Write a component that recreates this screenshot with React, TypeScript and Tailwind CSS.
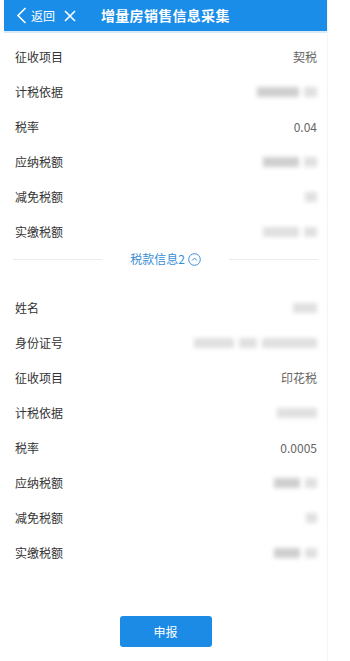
import React from "react";

type Seg = { w: number; shade: string };

function Blur({ segs }: { segs: Seg[] }) {
  return (
    <div className="flex items-center gap-[5px] blur-[2px]">
      {segs.map((s, i) => (
        <div key={i} className={`h-[10px] ${s.shade}`} style={{ width: s.w }} />
      ))}
    </div>
  );
}

type Row = { label: string; value?: string; blur?: Seg[] };

const L = "bg-[#e0e0e0]";
const M = "bg-[#cfcfcf]";

const sec1: Row[] = [
  { label: "征收项目", value: "契税" },
  { label: "计税依据", blur: [{ w: 42, shade: M }, { w: 13, shade: L }] },
  { label: "税率", value: "0.04" },
  { label: "应纳税额", blur: [{ w: 36, shade: M }, { w: 13, shade: L }] },
  { label: "减免税额", blur: [{ w: 12, shade: L }] },
  { label: "实缴税额", blur: [{ w: 36, shade: L }, { w: 13, shade: L }] },
];

const sec2: Row[] = [
  { label: "姓名", blur: [{ w: 24, shade: L }] },
  { label: "身份证号", blur: [{ w: 40, shade: L }, { w: 18, shade: L }, { w: 55, shade: L }] },
  { label: "征收项目", value: "印花税" },
  { label: "计税依据", blur: [{ w: 40, shade: L }] },
  { label: "税率", value: "0.0005" },
  { label: "应纳税额", blur: [{ w: 26, shade: M }, { w: 12, shade: L }] },
  { label: "减免税额", blur: [{ w: 11, shade: L }] },
  { label: "实缴税额", blur: [{ w: 26, shade: M }, { w: 12, shade: L }] },
];

function Rows({ rows }: { rows: Row[] }) {
  return (
    <div className="flex flex-col">
      {rows.map((r, i) => (
        <div key={i} className="h-[35px] flex items-center justify-between pl-[11px] pr-[10px]">
          <span className="text-[12px] text-[#333]">{r.label}</span>
          {r.value ? (
            <span className="text-[12px] text-[#666]">{r.value}</span>
          ) : (
            <Blur segs={r.blur || []} />
          )}
        </div>
      ))}
    </div>
  );
}

export default function App() {
  return (
    <div
      className="w-[350px] h-[661px] bg-white flex overflow-hidden"
      style={{ fontFamily: '"Noto Sans CJK SC", "Noto Sans", sans-serif' }}
    >
      <div className="ml-[4px] w-[324px] flex flex-col border-r border-[#f4f4f4]">
        <div className="h-[33px] bg-[#1a8de8] border-b-2 border-[#d9eaf8] flex items-center text-white shrink-0">
          <svg width="11" height="17" viewBox="0 0 11 17" className="ml-[12px]">
            <path d="M9.5 1 L2 8.5 L9.5 16" fill="none" stroke="white" strokeWidth="1.6" />
          </svg>
          <span className="ml-[4px] text-[12px]">返回</span>
          <svg width="12" height="12" viewBox="0 0 12 12" className="ml-[9px]">
            <path d="M1 1 L11 11 M11 1 L1 11" fill="none" stroke="white" strokeWidth="1.6" />
          </svg>
          <span className="ml-[25px] text-[14px] font-bold tracking-[0.3px]">增量房销售信息采集</span>
        </div>
        <div className="pt-[6px]">
          <Rows rows={sec1} />
        </div>
        <div className="h-[20px] flex items-center px-[9px]">
          <div className="flex-1 h-px bg-[#ececec]" />
          <div className="flex items-center px-[28px] text-[12px] text-[#3a8ed6]">
            <span>税款信息2</span>
            <svg width="13" height="13" viewBox="0 0 13 13" className="ml-[3px]">
              <circle cx="6.5" cy="6.5" r="5.8" fill="none" stroke="#3a8ed6" strokeWidth="1" />
              <path d="M4 7.6 L6.5 5.1 L9 7.6" fill="none" stroke="#3a8ed6" strokeWidth="1" />
            </svg>
          </div>
          <div className="flex-1 h-px bg-[#ececec]" />
        </div>
        <div className="pt-[21px]">
          <Rows rows={sec2} />
        </div>
        <div className="flex justify-center pt-[46px]">
          <button className="w-[92px] h-[31px] rounded-[3px] bg-[#1c8be6] text-white text-[12px]">
            申报
          </button>
        </div>
      </div>
    </div>
  );
}
